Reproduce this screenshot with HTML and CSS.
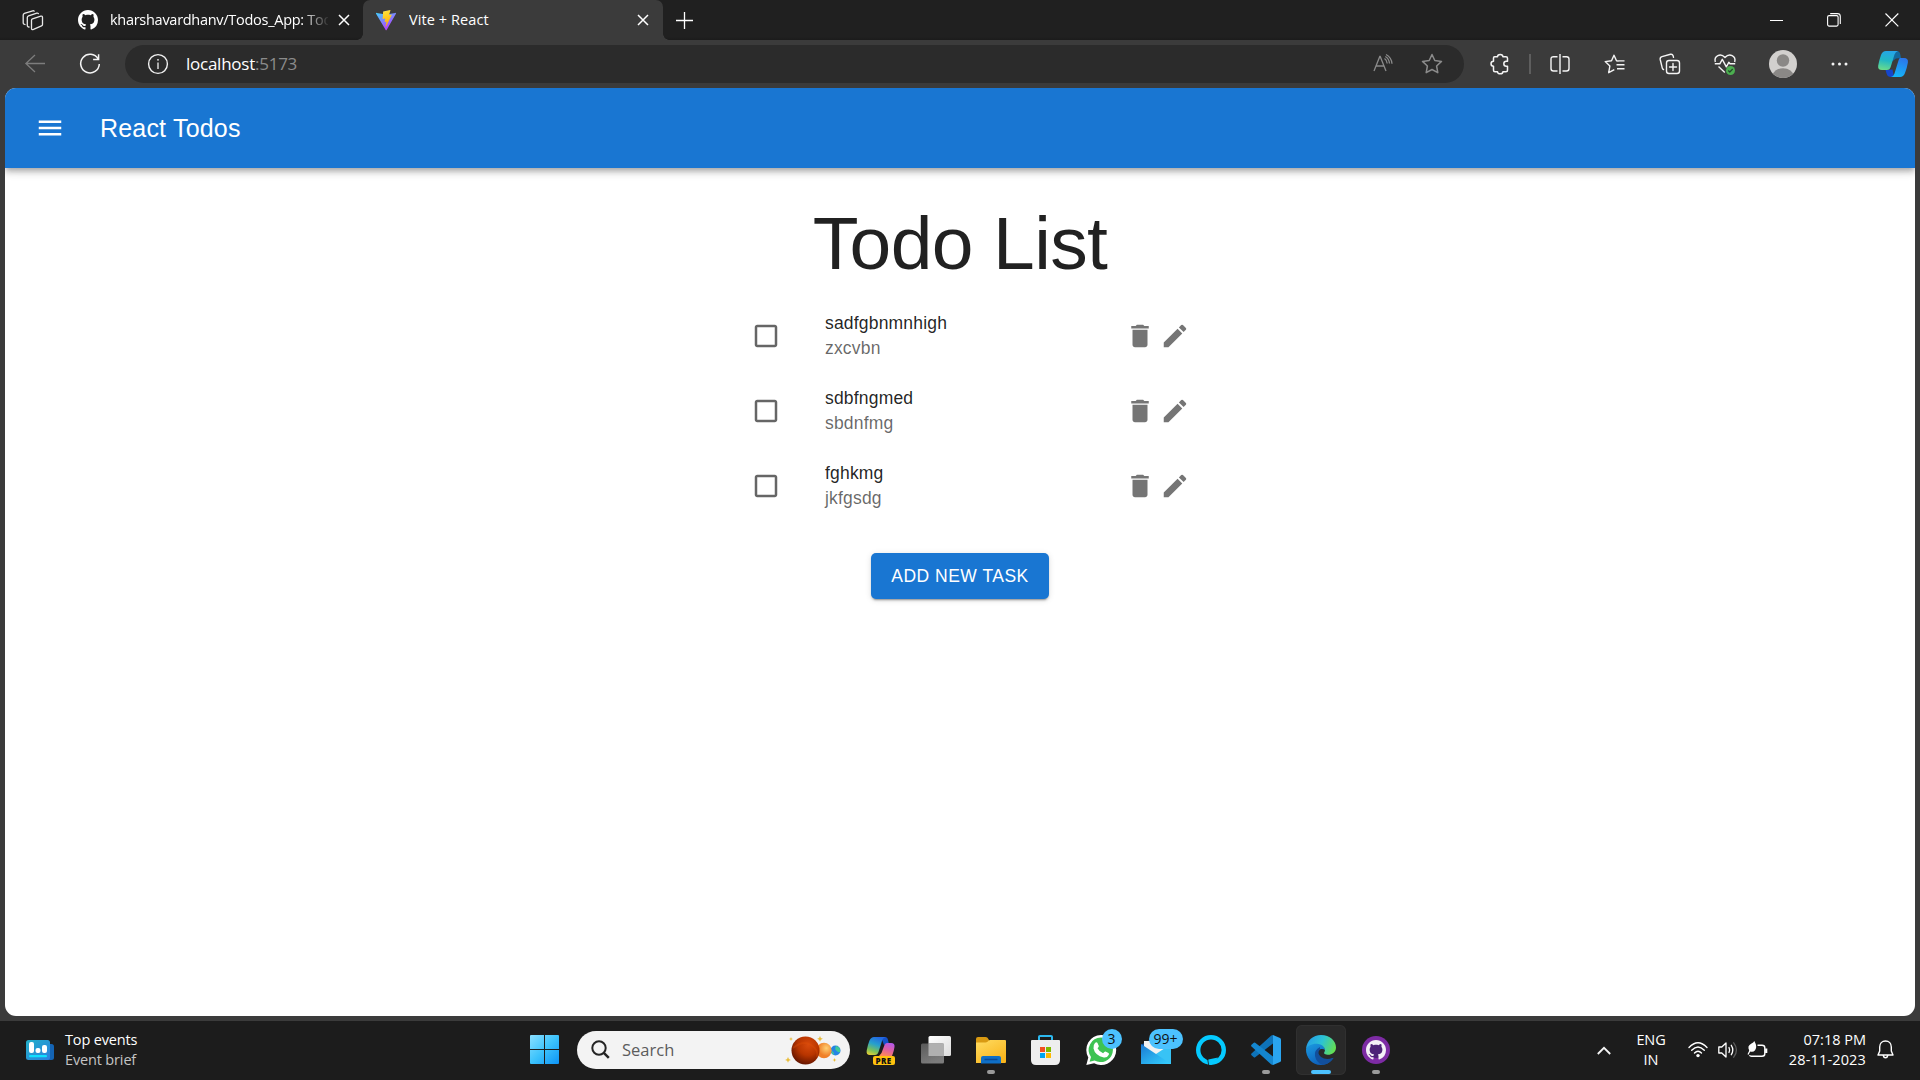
FILE: index.html
```html
<!DOCTYPE html>
<html lang="en">
<head>
<meta charset="utf-8">
<title>Vite + React</title>
<link rel="stylesheet" href="styles.css">
</head>
<body>
<svg class="defs" width="0" height="0">
  <defs>
    <symbol id="github" viewBox="0 0 16 16"><path fill="currentColor" d="M8 0C3.58 0 0 3.58 0 8c0 3.54 2.29 6.53 5.47 7.59.4.07.55-.17.55-.38 0-.19-.01-.82-.01-1.49-2.01.37-2.53-.49-2.69-.94-.09-.23-.48-.94-.82-1.13-.28-.15-.68-.52-.01-.53.63-.01 1.08.58 1.23.82.72 1.21 1.87.87 2.33.66.07-.52.28-.87.51-1.07-1.78-.2-3.64-.89-3.64-3.95 0-.87.31-1.59.82-2.15-.08-.2-.36-1.02.08-2.12 0 0 .67-.21 2.2.82.64-.18 1.32-.27 2-.27s1.36.09 2 .27c1.53-1.04 2.2-.82 2.2-.82.44 1.1.16 1.92.08 2.12.51.56.82 1.27.82 2.15 0 3.07-1.87 3.75-3.65 3.95.29.25.54.73.54 1.48 0 1.07-.01 1.93-.01 2.2 0 .21.15.46.55.38A8.01 8.01 0 0 0 16 8c0-4.42-3.58-8-8-8z"/></symbol>
    <symbol id="cross" viewBox="0 0 12 12"><path d="M1 1l10 10M11 1L1 11" fill="none" stroke="currentColor" stroke-width="1.5"/></symbol>
    <symbol id="box" viewBox="0 0 24 24"><path fill="currentColor" d="M19 5v14H5V5h14m0-2H5c-1.1 0-2 .9-2 2v14c0 1.1.9 2 2 2h14c1.1 0 2-.9 2-2V5c0-1.100-.9-2-2-2z"/></symbol>
    <symbol id="trash" viewBox="0 0 24 24"><path fill="currentColor" d="M6 19c0 1.100.9 2 2 2h8c1.100 0 2-.9 2-2V7H6v12zM19 4h-3.500l-1-1h-5l-1 1H5v2h14V4z"/></symbol>
    <symbol id="pencil" viewBox="0 0 24 24"><path fill="currentColor" d="M3 17.250V21h3.750L17.810 9.940l-3.750-3.750L3 17.250zM20.710 7.040c.39-.39.39-1.020 0-1.410l-2.340-2.340a.9959.9959 0 0 0-1.410 0l-1.830 1.830 3.750 3.750 1.830-1.830z"/></symbol>
  </defs>
</svg>

<header class="tabstrip">
  <svg class="workspaces" width="22" height="21" viewBox="0 0 22 21" fill="none" stroke="#e8e8e8" stroke-width="1.300" stroke-linejoin="round" stroke-linecap="round">
    <path d="M9.500 10.200q0-1 1-1.400l8.300-2.600q1.700-.4 1.700 1.200v7q0 1.100-1 1.500l-8 3.500q-2 .8-2-1.200z"/>
    <path d="M7 17l-1-.2q-.7-.4-.7-1.500V7.500q0-1.200 1.200-1.700l8.300-2.600q1-.2 1.600.4"/>
    <path d="M3 14.500l-1-.3q-.8-.4-.8-1.500V5q0-1.200 1.200-1.700l8.300-2.500q1-.2 1.500.3"/>
  </svg>
  <div class="tab">
    <svg class="favicon" width="20" height="20"><use href="#github"/></svg>
    <span class="tab-title faded">kharshavardhanv/Todos_App: Todo</span>
    <svg class="tab-close" width="12" height="12"><use href="#cross"/></svg>
  </div>
  <div class="tab active">
    <svg class="favicon" width="20" height="20" viewBox="0 0 32 32">
      <defs>
        <linearGradient id="va" x1="0" y1="0" x2=".6" y2="1"><stop offset="0" stop-color="#41d1ff"/><stop offset="1" stop-color="#bd34fe"/></linearGradient>
        <linearGradient id="vb" x1=".4" y1="0" x2=".6" y2="1"><stop offset="0" stop-color="#ffea83"/><stop offset=".1" stop-color="#ffdd35"/><stop offset="1" stop-color="#ffa800"/></linearGradient>
      </defs>
      <path fill="url(#va)" d="M31.900 5.800L17 32.100c-.3.600-1.200.600-1.500 0L.1 5.800c-.3-.6.200-1.300.9-1.200l15.200 2.700L31 4.600c.7-.1 1.200.6.900 1.200z"/>
      <path fill="url(#vb)" d="M22.600 0L11.700 2.200c-.2 0-.3.200-.3.400l-.7 11.400c0 .3.200.5.500.4l3.100-.7c.3-.1.500.2.500.5l-.9 4.500c-.1.300.2.600.5.500l1.900-.6c.3-.1.600.2.500.5l-1.400 7c-.1.500.500.700.7.300l9.100-18.500c.2-.3-.1-.7-.4-.6l-3.200.6c-.3.100-.6-.2-.5-.5L23.100.5c.1-.3-.2-.600-.5-.5z"/>
    </svg>
    <span class="tab-title">Vite + React</span>
    <svg class="tab-close" width="12" height="12"><use href="#cross"/></svg>
  </div>
  <svg class="new-tab" width="19" height="19" viewBox="0 0 19 19"><path d="M1 9.500h17M9.500 1v17" stroke="#fff" stroke-width="1.300"/></svg>
  <div class="window-controls">
    <svg width="14" height="14" viewBox="0 0 14 14"><path d="M0 7.500h13" stroke="#fff"/></svg>
    <svg width="14" height="14" viewBox="0 0 14 14" fill="none" stroke="#fff" stroke-width="1.100"><rect x=".6" y="2.600" width="10.500" height="10.500" rx="1.500"/><path d="M3.200.6h7.300q2.800 0 2.800 2.800V11"/></svg>
    <svg width="14" height="14" viewBox="0 0 14 14"><path d="M.5.5l12.800 12.800M13.300.5L.5 13.300" stroke="#fff" stroke-width="1.200"/></svg>
  </div>
</header>

<nav class="toolbar">
  <svg class="back" width="20" height="20" viewBox="0 0 20 20" fill="none" stroke="#7d7d7d" stroke-width="1.300"><path d="M10 1L.9 9.500 10 18M1 9.500h19"/></svg>
  <svg class="refresh" width="22" height="22" viewBox="0 0 22 22" fill="none" stroke="#f4f4f4" stroke-width="1.500"><path d="M19.100 6A9.300 9.300 0 1 0 20.300 11M19.600 1.200V6.500h-5.500"/></svg>
  <div class="address">
    <svg width="22" height="22" viewBox="0 0 22 22" fill="none" stroke="#f2f2f2"><circle cx="11" cy="11" r="9.400" stroke-width="1.400"/><path d="M11 9.500V16" stroke-width="1.300"/><circle cx="11" cy="6.800" r=".9" fill="#f2f2f2" stroke="none"/></svg>
    <span class="url">localhost<span class="port">:5173</span></span>
    <svg class="read" width="20" height="20" viewBox="0 0 20 20" fill="none" stroke="#8b8b8b" stroke-width="1.300"><path d="M1 17L6.800 2.500h.4L13 17M3 12h8M11.500 4.500q2.300 1.500 2.700 5M13 .5q5.500 3 6 9.200M12.300 2.500q3.700 2 4.200 7"/></svg>
    <svg class="star" width="22" height="22" viewBox="0 0 22 22" fill="none" stroke="#8b8b8b" stroke-width="1.500" stroke-linejoin="round"><path d="M11 1.500l2.800 6 6.700.9-4.900 4.600 1.200 6.700-5.800-3.200-5.800 3.200 1.200-6.700L1.500 8.400l6.700-.9z"/></svg>
  </div>
  <svg class="puzzle" width="20" height="22" viewBox="0 0 20 22" fill="none" stroke="#f4f4f4" stroke-width="1.500" stroke-linejoin="round"><path d="M4.500 3.800h3C7.500.7 12.900.7 12.900 3.800h3.100q1.500 0 1.500 1.500v3h-1.200c-3.300 0-3.300 4.900 0 4.900h1.200v4q0 1.500-1.500 1.500h-3.100c0 2.800-5.400 2.800-5.400 0H5q-1.500 0-1.500-1.500v-4c-3.300 0-3.300-4.900 0-4.900V5q0-1.200 1-1.200z"/></svg>
  <span class="divider"></span>
  <svg class="split" width="20" height="20" viewBox="0 0 20 20" fill="none" stroke="#f4f4f4" stroke-width="1.400"><path d="M7.500 2.700H3.500Q1 2.700 1 5v9.500Q1 17 3.500 17h4M12.500 2.700h4Q19 2.700 19 5v9.500q0 2.500-2.500 2.500h-4M10 0v20"/></svg>
  <svg class="favs" width="21" height="21" viewBox="0 0 21 21" fill="none" stroke="#f4f4f4" stroke-width="1.400" stroke-linejoin="round"><path d="M14.500 7l-2-.2L10 1.200 7.500 6.800l-6.300.8 4.700 4.300-1.200 6.800 5.600-3M12.500 10.700H20.500M14 6.900H20.500M13 14.700h7.500" /></svg>
  <svg class="collections" width="22" height="22" viewBox="0 0 22 22" fill="none" stroke="#f4f4f4" stroke-width="1.400" stroke-linecap="round"><rect x="7.500" y="7.500" width="13" height="13" rx="2.500"/><path d="M14 10.500v7M10.500 14h7M4.500 16.500q-1-.3-1.200-1.300L1.200 6.500Q.8 4.300 3 3.600L11.500 1.300q2-.4 2.600 1.400l.4 1.600"/></svg>
  <svg class="health" width="22" height="22" viewBox="0 0 22 22" fill="none" stroke="#f4f4f4" stroke-width="1.400" stroke-linejoin="round"><path d="M1.300 9C-.3 3 6.500-.5 11 4.500 15.500-.5 22.300 3 20.700 9M.8 10.800h5l2.500-4.500 4 7.500 2.500-4.500 1.200 1.500h5.200M4.500 13.500l6.300 6"/><circle cx="16.500" cy="17.500" r="4.500" fill="#4caf50" stroke="none"/><path d="M14.300 17.500l1.500 1.500 2.900-3" stroke="#24482a" stroke-width="1.200"/></svg>
  <svg class="avatar" width="28" height="28" viewBox="0 0 28 28"><clipPath id="av"><circle cx="14" cy="14" r="14"/></clipPath><g clip-path="url(#av)"><path fill="#d2d0ce" d="M0 0h28v28H0z"/><circle cx="14" cy="10.500" r="6.200" fill="#8a8886"/><ellipse cx="14" cy="26" rx="10.500" ry="7.700" fill="#8a8886"/></g></svg>
  <svg class="dots" width="17" height="4" viewBox="0 0 17 4" fill="#f4f4f4"><circle cx="2" cy="2" r="1.500"/><circle cx="8.500" cy="2" r="1.500"/><circle cx="15" cy="2" r="1.500"/></svg>
  <svg class="copilot" width="30" height="28" viewBox="0 0 30 28">
    <defs>
      <linearGradient id="ca" x1=".5" y1="0" x2=".3" y2="1"><stop stop-color="#25a5e8"/><stop offset=".5" stop-color="#22b8c4"/><stop offset="1" stop-color="#6bdc8b"/></linearGradient>
      <linearGradient id="cb" x1=".6" y1="0" x2=".3" y2="1"><stop stop-color="#2b76ea"/><stop offset="1" stop-color="#14b8fa"/></linearGradient>
    </defs>
    <path fill="#13699e" d="M14 1h5q2.500 0 3.200 3l.8 4-5 .5-4 3z"/>
    <path fill="#1546cc" d="M7.500 20l7-.5 1.500 7.500h-3q-3.500 0-4.300-3z"/>
    <path fill="url(#ca)" d="M8 1h12q-2.500.5-3.500 3.500l-4 13q-.8 2.500-3.500 2.500H4q-4.500 0-3.800-4.500Q1.500 9 3 5 4.500 1 8 1z"/>
    <path fill="url(#cb)" d="M22 8h4q4.500 0 3.900 4.500Q29 18 27 23q-1.500 4-5 4h-9q2.500-.5 3.500-3.500l4-13Q21 8 22 8z"/>
  </svg>
</nav>

<main class="page">
  <div class="appbar">
    <svg width="30" height="30" viewBox="0 0 24 24" fill="#fff"><path d="M3 18h18v-2H3v2zm0-5h18v-2H3v2zm0-7v2h18V6H3z"/></svg>
    <span class="brand">React Todos</span>
  </div>
  <h1 class="heading">Todo List</h1>
  <ul class="todos">
    <li class="todo">
      <svg class="check" width="30" height="30"><use href="#box"/></svg>
      <div class="todo-text"><p>sadfgbnmnhigh</p><p class="sub">zxcvbn</p></div>
      <div class="actions"><svg width="30" height="30"><use href="#trash"/></svg><svg width="30" height="30"><use href="#pencil"/></svg></div>
    </li>
    <li class="todo">
      <svg class="check" width="30" height="30"><use href="#box"/></svg>
      <div class="todo-text"><p>sdbfngmed</p><p class="sub">sbdnfmg</p></div>
      <div class="actions"><svg width="30" height="30"><use href="#trash"/></svg><svg width="30" height="30"><use href="#pencil"/></svg></div>
    </li>
    <li class="todo">
      <svg class="check" width="30" height="30"><use href="#box"/></svg>
      <div class="todo-text"><p>fghkmg</p><p class="sub">jkfgsdg</p></div>
      <div class="actions"><svg width="30" height="30"><use href="#trash"/></svg><svg width="30" height="30"><use href="#pencil"/></svg></div>
    </li>
  </ul>
  <button class="add">ADD NEW TASK</button>
</main>

<footer class="taskbar">
  <div class="widget">
    <svg width="28" height="20" viewBox="0 0 28 20"><defs><linearGradient id="wg" x2="1" y2="1"><stop stop-color="#22b0c8"/><stop offset="1" stop-color="#2c7fe0"/></linearGradient></defs><rect x="14" y="4" width="14" height="16" rx="2.500" fill="#1464b4"/><rect width="24" height="20" rx="2.500" fill="url(#wg)"/><g fill="#fff"><rect x="3" y="2" width="5" height="11" rx="2"/><rect x="9.500" y="8" width="5" height="5" rx="2"/><rect x="16" y="5" width="5" height="8" rx="2"/></g><rect x="3" y="15" width="18" height="2.200" rx="1" fill="#10e0ff"/></svg>
    <div class="widget-text"><span>Top events</span><span class="dim">Event brief</span></div>
  </div>
  <div class="apps">
    <svg class="start" width="29" height="29" viewBox="0 0 29 29"><defs><linearGradient id="win" x1="0" y1="0" x2="29" y2="29" gradientUnits="userSpaceOnUse"><stop stop-color="#8be0ff"/><stop offset=".5" stop-color="#3dc3fc"/><stop offset="1" stop-color="#0d93f5"/></linearGradient></defs><path fill="url(#win)" d="M1 0h13v14H0V1q0-1 1-1zM15 0h13q1 0 1 1v13H15zM0 15h14v14H1q-1 0-1-1zM15 15h14v13q0 1-1 1H15z"/></svg>
    <div class="search">
      <svg width="19" height="19" viewBox="0 0 19 19" fill="none" stroke="#242424" stroke-width="2"><circle cx="8" cy="8" r="6.700"/><path d="M12.800 12.800l5 5" stroke-width="2.500"/></svg>
      <span class="placeholder">Search</span>
      <svg class="planets" width="56" height="30" viewBox="0 0 56 30">
        <defs>
          <radialGradient id="p1" cx=".6" cy=".3" r=".75"><stop stop-color="#d84a0c"/><stop offset=".5" stop-color="#b83500"/><stop offset="1" stop-color="#5c1200"/></radialGradient>
          <radialGradient id="p2" cx=".65" cy=".35"><stop stop-color="#ffcf72"/><stop offset="1" stop-color="#f08028"/></radialGradient>
        </defs>
        <circle cx="50.500" cy="15.500" r="5" fill="#2484e4"/><path d="M51 11q5 1 4 6-2 1-3-1-3-1-1-5zM46 16q3 0 3 4-2-1-3-4z" fill="#3fc998"/>
        <circle cx="39" cy="15.500" r="7.700" fill="url(#p2)"/><circle cx="20.500" cy="15.500" r="14" fill="url(#p1)"/>
        <path d="M8 13q10-8 18-3t6 12" fill="none" stroke="#e05008" stroke-width="2" opacity=".35"/>
        <g fill="#e9bd3a"><path d="M35 1l.9 2 2 .8-2 .9-.9 2-.9-2-2-.9 2-.8zM3 22l.9 2 2 .9-2 .9-.9 2-.9-2-2-.9 2-.9zM6 2l.6 1.400L8 4l-1.400.6L6 6l-.6-1.400L4 4l1.400-.6zM49.500 23l.6 1.400 1.400.6-1.400.6-.6 1.400-.6-1.400-1.400-.6 1.400-.6z"/></g>
      </svg>
    </div>
    <div class="app">
      <svg width="30" height="30" viewBox="0 0 30 30">
        <defs><linearGradient id="q1" x1=".6" y1="0" x2=".2" y2="1"><stop stop-color="#2367e2"/><stop offset=".4" stop-color="#26a0ce"/><stop offset=".75" stop-color="#7ac05a"/><stop offset="1" stop-color="#e4cf35"/></linearGradient><linearGradient id="q2" x1=".7" y1="0" x2=".3" y2="1"><stop stop-color="#b458e8"/><stop offset=".5" stop-color="#e060a0"/><stop offset="1" stop-color="#ff8a55"/></linearGradient></defs>
        <path fill="#1450c8" d="M15 2h4q2.500 0 3 3l1 4-5 1z"/>
        <path fill="url(#q1)" d="M8 2h12q-3 .5-4 4l-3.500 11Q11.500 20 9 20H4Q0 20 .7 15.500 2 9 3.500 5.500 5 2 8 2z"/>
        <path fill="url(#q2)" d="M21 8h4q4 0 3.500 4T26 21H13l2.500-3 3-8Q19.500 8 21 8z"/>
      </svg>
      <span class="pre">PRE</span>
    </div>
    <div class="app">
      <svg width="30" height="28" viewBox="0 0 30 28"><defs><linearGradient id="tv" x2="1" y2="1"><stop stop-color="#fff"/><stop offset="1" stop-color="#dcdcdc"/></linearGradient><linearGradient id="tg" x2=".4" y2="1"><stop stop-color="#5a5a5a"/><stop offset="1" stop-color="#7c7c7c"/></linearGradient></defs><rect x="7.500" width="22.500" height="20" rx="1.500" fill="url(#tv)"/><rect y="7.500" width="23" height="20" rx="1.500" fill="url(#tg)"/><path d="M7.500 7.500H23V20H7.500z" fill="#b0b0b0"/></svg>
    </div>
    <div class="app running">
      <svg width="30" height="28" viewBox="0 0 30 28"><defs><linearGradient id="fo" x2=".7" y2="1"><stop stop-color="#ffdc62"/><stop offset="1" stop-color="#f9b51c"/></linearGradient></defs><path d="M0 3q0-2 2-2h7.500q1.200 0 2 .8L13 4v5H0z" fill="#d99a12"/><path d="M0 6.500h9.500q1.200 0 2-.8L12.500 4.700q.6-.7 1.500-.7h15q1 0 1 1v21q0 1-1 1H0z" fill="url(#fo)"/><path d="M5 22q0-2 2-2h16q2 0 2 2v5.500H5z" fill="#0f6fc6"/><path d="M8.500 23.500h13" stroke="#0a4a96" stroke-width="1.500"/></svg>
    </div>
    <div class="app">
      <svg width="29" height="30" viewBox="0 0 29 30"><path d="M8 6V1.800Q8 1 9 1h11q1 0 1 .8V6" fill="none" stroke="#2cb8ee" stroke-width="2"/><path d="M0 6q0-1 1-1h27q1 0 1 1v19q0 5-5 5H5q-5 0-5-5z" fill="#eee"/><path d="M9 12h5v5H9z" fill="#f25022"/><path d="M15 12h5v5h-5z" fill="#7fba00"/><path d="M9 18h5v5H9z" fill="#00a4ef"/><path d="M15 18h5v5h-5z" fill="#ffb900"/></svg>
    </div>
    <div class="app">
      <svg width="30" height="30" viewBox="0 0 30 30"><path fill="#fff" d="M15 0a15 15 0 1 1-6.900 28.200L.3 30l2-7.500A15 15 0 0 1 15 0z"/><path fill="#3dc353" d="M15 2.500A12.300 12.300 0 1 1 8.600 25.500l-5 1.200 1.400-4.800A12.300 12.300 0 0 1 15 2.500z"/><path fill="#fff" d="M9 8q1.500-1.500 2.500 0l1.300 3q.2 1-1.300 2.300 2 3.700 5.600 5 1.500-2.100 2.400-1.800l3 1.500q.8.500.3 1.800-1.500 3.200-5 2.700Q9 20.500 7.500 13.500 7 10 9 8z"/></svg>
      <span class="badge">3</span>
    </div>
    <div class="app">
      <svg width="30" height="30" viewBox="0 0 30 30"><defs><linearGradient id="ml" x2="1" y2="1"><stop stop-color="#1a78d2"/><stop offset=".5" stop-color="#28a8ea"/><stop offset="1" stop-color="#35d0ff"/></linearGradient></defs><path d="M0 10L15 1l15 9v10H0z" fill="#0b4f9e"/><path d="M3 6h24v10l-12 6L3 14z" fill="#f2f2f2"/><path d="M30 9v20H0z" fill="#38c3f5"/><path d="M0 9l30 20H0z" fill="url(#ml)"/></svg>
      <span class="badge wide">99+</span>
    </div>
    <div class="app">
      <svg width="30" height="30" viewBox="0 0 30 30"><circle cx="15" cy="15" r="12.800" fill="none" stroke="#05caff" stroke-width="4.400"/><path d="M12.300 24.500l.8 5.500 2.500-.5 6.400-7z" fill="#05caff"/><path d="M11.800 25l.9 5" stroke="#1c1c1c" stroke-width=".8"/></svg>
    </div>
    <div class="app running">
      <svg width="30" height="30" viewBox="0 0 30 30"><path d="M22 0v8.500L4.200 22.300q-.7.500-1.400 0L.5 20.200q-.8-.9 0-1.600L20 .8Q21 0 22 0z" fill="#0e73b9"/><path d="M22 30v-8.500L4.200 7.700q-.7-.5-1.400 0L.5 9.800q-.8.900 0 1.600L20 29.200q1 .8 2 .8z" fill="#1486cf"/><path d="M22 0l7 3q1 .500 1 1.500v21q0 1-1 1.500l-7 3z" fill="#2aa5f0"/></svg>
    </div>
    <div class="app running focused">
      <svg width="30" height="30" viewBox="0 0 30 30"><defs><linearGradient id="e1" x1="0" y1=".3" x2="1" y2=".6"><stop stop-color="#259de8"/><stop offset=".5" stop-color="#2cc3d4"/><stop offset="1" stop-color="#65df50"/></linearGradient><linearGradient id="e2" x1="0" y1="0" x2=".6" y2="1"><stop stop-color="#1b9de2"/><stop offset="1" stop-color="#0d5bb8"/></linearGradient></defs><path fill="url(#e2)" d="M0 14Q2 7.500 10 8c6 0 9 3.500 9 7-2-2-8-1-7.500 3.500C12 24 19 27 27 23c-3 5-7.500 7-12 7C6 30-.3 22.500 0 14z"/><path fill="#124f9c" d="M14 12q-6 3-5 9 1.200 6.500 7.500 8.900Q23.500 29 27.300 23.500q.5-1-.6-.6Q20 25.500 15 22q-4.500-4-1-7.500z"/><path fill="url(#e1)" d="M0 14C.8 5.500 7 0 15 0c9 0 15 6 15 12.500 0 5.500-5 7.500-8.500 7.200-3.500-.3-4-1.700-3-2.700C20.500 13 16 8.700 10.500 8.700 5 8.700 1.500 11 0 14z"/></svg>
    </div>
    <div class="app running">
      <svg width="28" height="28" viewBox="0 0 28 28"><circle cx="14" cy="14" r="14" fill="#7d2ba4"/><circle cx="14" cy="14" r="8" fill="#4d2378"/><svg x="4" y="4" width="20" height="20" color="#f4f0f7"><use href="#github"/></svg></svg>
    </div>
  </div>
  <div class="tray">
    <svg class="chevron" width="14" height="9" viewBox="0 0 14 9" fill="none" stroke="#f4f4f4" stroke-width="1.800"><path d="M.8 8L7 1.800 13.200 8"/></svg>
    <div class="lang"><span>ENG</span><span>IN</span></div>
    <svg class="wifi" width="20" height="16" viewBox="0 0 20 16" fill="none" stroke="#fff" stroke-width="1.400" stroke-linecap="round"><path d="M1 5.500q9-9.500 18 0M3.700 8.300q6.300-6.600 12.600 0M6.500 11.100q3.500-3.600 7 0"/><circle cx="10" cy="13.600" r="1.700" fill="#fff" stroke="none"/></svg>
    <svg class="sound" width="20" height="18" viewBox="0 0 20 18" fill="none" stroke="#fff" stroke-width="1.300" stroke-linejoin="round" stroke-linecap="round"><path d="M.8 6h3L8 2v14l-4.200-4h-3zM11 6.500q1.300 2.500 0 5M13.300 4.300q3 4.700 0 9.400"/><path d="M15.700 1.800q5.500 7.200 0 14.400" stroke="#5c5c5c"/></svg>
    <svg class="battery" width="21" height="18" viewBox="0 0 21 18" fill="none" stroke="#fff" stroke-width="1.400"><path d="M10.500 4.200H15q2.800 0 2.800 2.500v6q0 2.500-2.800 2.500H4.500q-1.500 0-2-1"/><path d="M19.200 7.500v4.500" stroke-width="2.200"/><path d="M7.300 0q3.500 6 .8 9.300-2.600 2.700-5.600.6Q-.5 5 4.500 2.500 6.500 1.500 7.300 0z" fill="#fff" stroke="none"/><path d="M5.500 6Q3 9 1 13.500" stroke="#fff" stroke-width="1.200"/></svg>
    <div class="clock"><span>07:18 PM</span><span class="date">28-11-2023</span></div>
    <svg class="bell" width="17" height="19" viewBox="0 0 17 19" fill="none" stroke="#fff" stroke-width="1.400" stroke-linejoin="round"><path d="M8.500 1C5 1 2.700 3.700 2.700 7v4L1 15h15l-1.700-4V7C14.300 3.700 12 1 8.500 1zM6.200 15.500q.5 2.300 2.300 2.300t2.300-2.300"/></svg>
  </div>
</footer>
</body>
</html>
```
FILE: styles.css
```css
* { box-sizing: border-box; margin: 0; padding: 0; }
body {
  width: 1920px;
  height: 1080px;
  overflow: hidden;
  display: flex;
  flex-direction: column;
  background: #3b3b3b;
  font-family: "Open Sans", "Noto Sans", sans-serif;
  color: #fff;
}
svg { display: block; flex: none; overflow: visible; }
.defs { position: absolute; }

/* Tab strip */
.tabstrip {
  height: 40px;
  flex: none;
  display: flex;
  align-items: center;
  background: linear-gradient(#202020 37px, #1b1b1b);
}
.workspaces { margin-left: 22px; }
.tab {
  height: 40px;
  width: 307px;
  margin-left: 12px;
  display: flex;
  align-items: center;
  padding: 0 13px 0 22px;
}
.tab.active {
  position: relative;
  width: 300px;
  margin-left: 0;
  padding: 0 14px 0 13px;
  background: #3b3b3b;
  border-radius: 7px 7px 0 0;
}
.tab.active::before, .tab.active::after {
  content: "";
  position: absolute;
  bottom: 0;
  width: 6px;
  height: 6px;
}
.tab.active::before { left: -6px; background: radial-gradient(circle at 0 0, transparent 5.500px, #3b3b3b 6px); }
.tab.active::after { right: -6px; background: radial-gradient(circle at 100% 0, transparent 5.500px, #3b3b3b 6px); }
.tab-title {
  flex: 1;
  margin-left: 12px;
  font-size: 14.500px;
  line-height: 20px;
  letter-spacing: -0.280px;
  white-space: nowrap;
  overflow: hidden;
}
.active .tab-title { margin-left: 13px; letter-spacing: 0.080px; }
.tab-title.faded {
  margin-right: 10px;
  -webkit-mask-image: linear-gradient(90deg, #000 192px, transparent 220px);
  mask-image: linear-gradient(90deg, #000 192px, transparent 220px);
}
.new-tab { margin-left: 12px; }
.window-controls { display: flex; gap: 43.500px; margin-left: auto; margin-right: 21.500px; }

/* Toolbar */
.toolbar { height: 48px; flex: none; display: flex; align-items: center; }
.back { margin-left: 25px; }
.refresh { margin-left: 34px; }
.address {
  width: 1339px;
  height: 38px;
  margin-left: 24px;
  padding-left: 21.500px;
  display: flex;
  align-items: center;
  border-radius: 19px;
  background: #2b2b2b;
}
.url { margin-left: 17.500px; font-size: 17px; line-height: 24px; letter-spacing: -0.250px; }
.port { color: #8b8b8b; }
.read { margin-left: auto; }
.star { margin-left: 28px; margin-right: 21px; }
.puzzle { margin-left: 25.500px; }
.divider { width: 2px; height: 20px; margin-left: 19.500px; background: #5e5e5e; }
.split { margin-left: 18.500px; }
.favs { margin-left: 34.500px; }
.collections { margin-left: 34px; }
.health { margin-left: 33px; }
.avatar { margin-left: 33px; }
.dots { margin-left: 34px; }
.copilot { margin-left: 29.500px; }

/* Page */
.page {
  height: 928px;
  flex: none;
  margin: 0 5px 5px;
  display: flex;
  flex-direction: column;
  align-items: center;
  background: #fff;
  border-radius: 11px;
  overflow: hidden;
  color: rgba(0, 0, 0, 0.87);
  font-family: "Liberation Sans", Arial, sans-serif;
}
.appbar {
  align-self: stretch;
  height: 80px;
  flex: none;
  display: flex;
  align-items: center;
  padding-left: 30px;
  background: #1976d2;
  color: #fff;
  box-shadow: 0 2.500px 5px -1px rgba(0, 0, 0, 0.2), 0 5px 6px rgba(0, 0, 0, 0.14), 0 1px 12.500px rgba(0, 0, 0, 0.12);
}
.brand { margin-left: 35px; font-size: 25px; line-height: 40px; letter-spacing: 0.190px; }
.heading { margin-top: 30px; font-size: 75px; font-weight: 400; line-height: 90px; letter-spacing: -0.620px; }
.todos { width: 450px; margin-top: 11px; list-style: none; }
.todo { height: 75px; display: flex; align-items: center; padding: 0 0 1px 16px; }
.check { color: rgba(0, 0, 0, 0.6); }
.todo-text { margin-left: 44px; font-size: 17.500px; line-height: 25px; letter-spacing: 0.187px; }
.sub { color: rgba(0, 0, 0, 0.6); }
.actions { display: flex; gap: 5px; margin-left: auto; margin-right: -5px; color: rgba(0, 0, 0, 0.54); }
.add {
  width: 178px;
  height: 46px;
  margin-top: 29px;
  border: 0;
  border-radius: 5px;
  background: #1976d2;
  color: #fff;
  font: 17.500px/30px "Liberation Sans", Arial, sans-serif;
  letter-spacing: 0.500px;
  white-space: nowrap;
  box-shadow: 0 3px 1px -2px rgba(0, 0, 0, 0.2), 0 2px 2px rgba(0, 0, 0, 0.14), 0 1px 6px rgba(0, 0, 0, 0.12);
}

/* Taskbar */
.taskbar {
  height: 59px;
  flex: none;
  display: flex;
  align-items: center;
  padding-bottom: 2px;
  background: #1c1c1c;
}
.widget { width: 530px; display: flex; align-items: center; padding-left: 26px; }
.widget-text {
  display: flex;
  flex-direction: column;
  margin-left: 11px;
  font-size: 14.500px;
  line-height: 20px;
  letter-spacing: -0.150px;
}
.widget .dim { color: #c4c4c4; }
.apps { display: flex; align-items: center; }
.search {
  width: 273px;
  height: 38px;
  margin: 0 3px 0 18px;
  padding: 0 9px 0 14px;
  display: flex;
  align-items: center;
  border-radius: 19px;
  background: #f3f3f3;
}
.placeholder { margin-left: 12px; font-size: 16.500px; line-height: 24px; color: #5c5c5c; }
.planets { margin-left: auto; }
.app {
  position: relative;
  width: 50px;
  height: 50px;
  margin-left: 2.500px;
  margin-right: 2.500px;
  display: flex;
  align-items: center;
  justify-content: center;
  border-radius: 6px;
}
.focused { background: #292929; box-shadow: inset 0 0 0 1px #303030; }
.running::after {
  content: "";
  position: absolute;
  bottom: 1px;
  left: 21px;
  width: 8px;
  height: 4px;
  border-radius: 2px;
  background: #9a9a9a;
}
.focused::after { left: 15px; width: 20px; background: #4cc2ff; }
.badge, .pre { position: absolute; color: #111; text-align: center; }
.badge {
  top: 4px;
  left: 26px;
  width: 20px;
  height: 20px;
  border-radius: 10px;
  background: #4cc2ff;
  font-size: 14px;
  line-height: 20px;
}
.badge.wide { left: 18px; width: 34px; }
.pre {
  left: 17px;
  top: 31px;
  width: 22px;
  height: 9px;
  border-radius: 2px;
  background: #ffc20e;
  font-size: 8px;
  font-weight: 800;
  line-height: 9px;
  letter-spacing: 0.400px;
}
.tray { display: flex; align-items: center; margin-left: auto; margin-right: 26px; }
.lang, .clock { display: flex; flex-direction: column; font-size: 14.500px; line-height: 20px; letter-spacing: 0; }
.lang { width: 32px; margin-left: 24px; align-items: center; letter-spacing: -0.100px; }
.chevron, .wifi, .sound, .battery { margin-top: 1px; }
.wifi { margin-left: 21px; }
.sound { margin-left: 10px; }
.battery { margin-left: 9px; }
.clock { width: 82px; margin-left: 16px; align-items: flex-end; }
.date { letter-spacing: 0.150px; }
.bell { margin-left: 11px; }
```
